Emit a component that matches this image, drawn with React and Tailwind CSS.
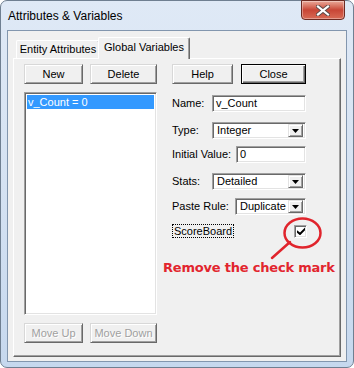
import React from "react";

const sunken =
  "border border-t-[#a0a0a0] border-l-[#a0a0a0] border-r-white border-b-white shadow-[inset_1px_1px_0_#696969,inset_-1px_-1px_0_#e3e3e3]";

function Btn({ children, w, def, disabled }) {
  const edge = def
    ? "border border-black shadow-[inset_1px_1px_0_#ffffff,inset_-1px_-1px_0_#696969,inset_-2px_-2px_0_#a0a0a0]"
    : "border border-t-[#d8d8d8] border-l-[#d8d8d8] border-r-[#696969] border-b-[#696969] shadow-[inset_1px_1px_0_#ffffff,inset_-1px_-1px_0_#a0a0a0]";
  return (
    <div
      className={`${w} h-[20px] shrink-0 flex items-center justify-center bg-[#f0f0f0] ${edge} ${
        disabled ? "text-[#a0a0a0] [text-shadow:1px_1px_0_#ffffff]" : "text-black"
      }`}
    >
      {children}
    </div>
  );
}

function Field({ value }) {
  return (
    <div className={`flex-1 h-[17px] bg-white ${sunken} flex items-center pl-[3px]`}>{value}</div>
  );
}

function Combo({ value }) {
  return (
    <div className={`flex-1 h-[17px] bg-white ${sunken} flex items-center justify-between pl-[4px] pr-[2px]`}>
      <span>{value}</span>
      <div className="w-[15px] h-[13px] bg-[#f0f0f0] border border-t-[#e3e3e3] border-l-[#e3e3e3] border-r-[#696969] border-b-[#696969] shadow-[inset_1px_1px_0_#ffffff,inset_-1px_-1px_0_#a0a0a0] flex items-center justify-center">
        <svg width="7" height="4" viewBox="0 0 7 4">
          <path d="M0 0h7L3.5 4z" fill="#000" />
        </svg>
      </div>
    </div>
  );
}

function Row({ label, lw, mt, children }) {
  return (
    <div className={`flex items-center h-[17px] ${mt}`}>
      <span className={`${lw} shrink-0`}>{label}</span>
      {children}
    </div>
  );
}

export default function App() {
  return (
    <div className="w-[354px] h-[368px] bg-white font-['Liberation_Sans',Arial,sans-serif] text-[11px] text-black">
      <div className="w-full h-full rounded-[7px] border border-[#6f7f91] bg-gradient-to-b from-[#dfe9f6] via-[#d5e2f2] to-[#c6d8ee] flex flex-col">
        {/* title bar */}
        <div className="h-[29px] shrink-0 flex items-start justify-between pl-[7px] pr-[8px]">
          <div className="mt-[8px] text-[12px] leading-[14px]">Attributes &amp; Variables</div>
          <div className="w-[44px] h-[20px] -mt-px rounded-b-[4px] border border-[#6d2a22] bg-gradient-to-b from-[#e9a899] via-[#c84536] to-[#d86a55] shadow-[inset_0_0_0_1px_rgba(255,255,255,0.35)] flex items-center justify-center">
            <svg width="14" height="11" viewBox="0 0 14 11">
              <path d="M2 1.5L12 9.5M12 1.5L2 9.5" stroke="#5a4a48" strokeWidth="4" strokeLinecap="square" />
              <path d="M2 1.5L12 9.5M12 1.5L2 9.5" stroke="#ffffff" strokeWidth="2.2" strokeLinecap="square" />
            </svg>
          </div>
        </div>

        {/* client area */}
        <div className="mx-[6px] mb-[5px] flex-1 border border-[#8296ae] bg-[#f0f0f0] pt-[6px] pl-[5px] pr-[5px]">
          {/* tab strip */}
          <div className="flex items-end h-[21px] w-[328px]">
            <div className="w-[3px] shrink-0" />
            <div className="w-[84px] h-[18px] shrink-0 flex items-center justify-center rounded-t-[2px] border-t border-l border-white border-r border-r-[#696969] shadow-[inset_-1px_0_0_#a0a0a0]">
              Entity Attributes
            </div>
            <div className="relative z-10 -ml-[2px] -mb-px w-[92px] h-[22px] shrink-0 flex items-center justify-center pb-[3px] bg-[#f0f0f0] rounded-t-[2px] border-t border-l border-white border-r border-r-[#696969] shadow-[inset_-1px_0_0_#a0a0a0]">
              Global Variables
            </div>
          </div>

          {/* tab panel */}
          <div className="relative w-[328px] h-[299px] border border-t-white border-l-white border-r-[#696969] border-b-[#696969] shadow-[inset_-1px_-1px_0_#a0a0a0] pl-[10px] pt-[5px] flex gap-[15px]">
            {/* left column */}
            <div className="w-[133px] flex flex-col">
              <div className="flex gap-[7px]">
                <Btn w="w-[59px]">New</Btn>
                <Btn w="w-[67px]">Delete</Btn>
              </div>
              <div className={`mt-[8px] h-[223px] bg-white ${sunken} p-[2px]`}>
                <div className="h-[14px] bg-[#3399ff] text-white flex items-center pl-[1px]">v_Count = 0</div>
              </div>
              <div className="mt-[8px] flex gap-[7px]">
                <Btn w="w-[59px]" disabled>Move Up</Btn>
                <Btn w="w-[67px]" disabled>Move Down</Btn>
              </div>
            </div>

            {/* right column */}
            <div className="w-[134px] flex flex-col">
              <div className="flex gap-[8px]">
                <Btn w="w-[61px]">Help</Btn>
                <Btn w="w-[65px]" def>Close</Btn>
              </div>
              <Row label="Name:" lw="w-[40px]" mt="mt-[11px]">
                <Field value="v_Count" />
              </Row>
              <Row label="Type:" lw="w-[40px]" mt="mt-[10px]">
                <Combo value="Integer" />
              </Row>
              <Row label="Initial Value:" lw="w-[64px]" mt="mt-[7px]">
                <Field value="0" />
              </Row>
              <Row label="Stats:" lw="w-[40px]" mt="mt-[10px]">
                <Combo value="Detailed" />
              </Row>
              <Row label="Paste Rule:" lw="w-[63px]" mt="mt-[8px]">
                <Combo value="Duplicate" />
              </Row>
              <div className="mt-[9px] h-[14px] flex items-center justify-between -mr-px">
                <span className="border border-dotted border-black leading-[12px] px-px">ScoreBoard</span>
                <div className={`w-[13px] h-[13px] bg-white ${sunken} flex items-center justify-center`}>
                  <svg width="8" height="8" viewBox="0 0 8 8">
                    <path d="M0 3.2v2.6L2.6 8h.8L8 3.2V.6L3 5.4z" fill="#000" />
                  </svg>
                </div>
              </div>
            </div>

            {/* annotation overlay */}
            <svg className="absolute left-0 top-0 pointer-events-none" width="326" height="297" viewBox="0 0 326 297">
              <ellipse cx="288.5" cy="174" rx="18" ry="14.5" fill="none" stroke="#e0242c" strokeWidth="2.5" />
              <path d="M276 183L258 199" stroke="#e0242c" strokeWidth="2.5" strokeLinecap="round" />
            </svg>
            <div className="absolute left-[149px] top-[201px] font-['DejaVu_Sans',Verdana,sans-serif] font-bold text-[13px] leading-[16px] tracking-[-0.2px] text-[#e2252e] whitespace-nowrap">
              Remove the check mark
            </div>
          </div>
        </div>
      </div>
    </div>
  );
}
